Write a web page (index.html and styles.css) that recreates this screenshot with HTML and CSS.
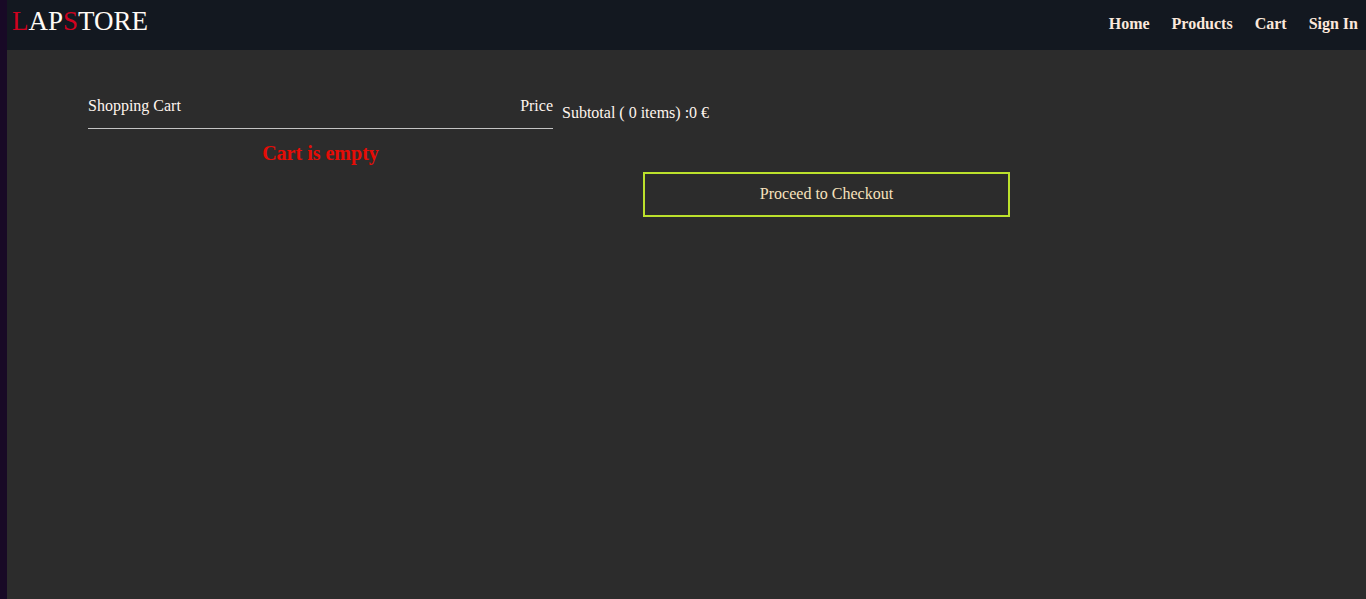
FILE: index.html
```html
<!DOCTYPE html>
<html lang="en">
<head>
<meta charset="utf-8">
<meta name="viewport" content="width=device-width, initial-scale=1">
<title>LapStore - Cart</title>
<link rel="stylesheet" href="styles.css">
</head>
<body class="page">
  <header class="navbar">
    <a class="logo" href="#"><span class="accent">L</span>AP<span class="accent">S</span>TORE</a>
    <nav class="menu">
      <a href="#">Home</a>
      <a href="#">Products</a>
      <a href="#">Cart</a>
      <a href="#">Sign In</a>
    </nav>
  </header>
  <main class="cart">
    <section class="items">
      <div class="items-head">
        <span>Shopping Cart</span>
        <span>Price</span>
      </div>
      <h2 class="empty">Cart is empty</h2>
    </section>
    <section class="summary">
      <p class="subtotal">Subtotal ( 0 items) :0 €</p>
      <button class="checkout" type="button">Proceed to Checkout</button>
    </section>
  </main>
</body>
</html>
```

FILE: styles.css
```css
* {
  box-sizing: border-box;
}

.page {
  margin: 0;
  min-height: 100vh;
  border-left: 7px solid #180926;
  background: #2c2c2c;
  color: #fff5ee;
  font-family: "Liberation Serif", "Times New Roman", serif;
  font-size: 16px;
  line-height: 18px;
}

.navbar {
  display: flex;
  justify-content: space-between;
  align-items: flex-start;
  height: 50px;
  padding: 6px 8px 0 5px;
  background: #131820;
}

.logo {
  color: #fffaf5;
  font-size: 27px;
  line-height: 30px;
  text-decoration: none;
}

.accent {
  color: #d0021f;
}

.menu {
  display: flex;
  gap: 22px;
  padding-top: 9px;
}

.menu a {
  color: #fbe8dc;
  font-weight: bold;
  text-decoration: none;
}

.cart {
  display: grid;
  grid-template-columns: 465fr 529fr 185fr;
  column-gap: 9px;
  padding: 47px 81px 0;
}

.items-head {
  display: flex;
  justify-content: space-between;
  padding-bottom: 13px;
  border-bottom: 1px solid #c4c4c4;
}

.empty {
  margin: 12px 0 0;
  color: #e60c06;
  font-size: 20px;
  line-height: 24px;
  text-align: center;
}

.subtotal {
  margin: 7px 0 0;
}

.checkout {
  display: block;
  width: calc(100% - 162px);
  margin: 50px auto 0;
  padding: 12px 0 13px;
  border: 2px solid #bce12c;
  background: transparent;
  color: #f8e2bd;
  font: inherit;
  line-height: 16px;
  cursor: pointer;
}
```
